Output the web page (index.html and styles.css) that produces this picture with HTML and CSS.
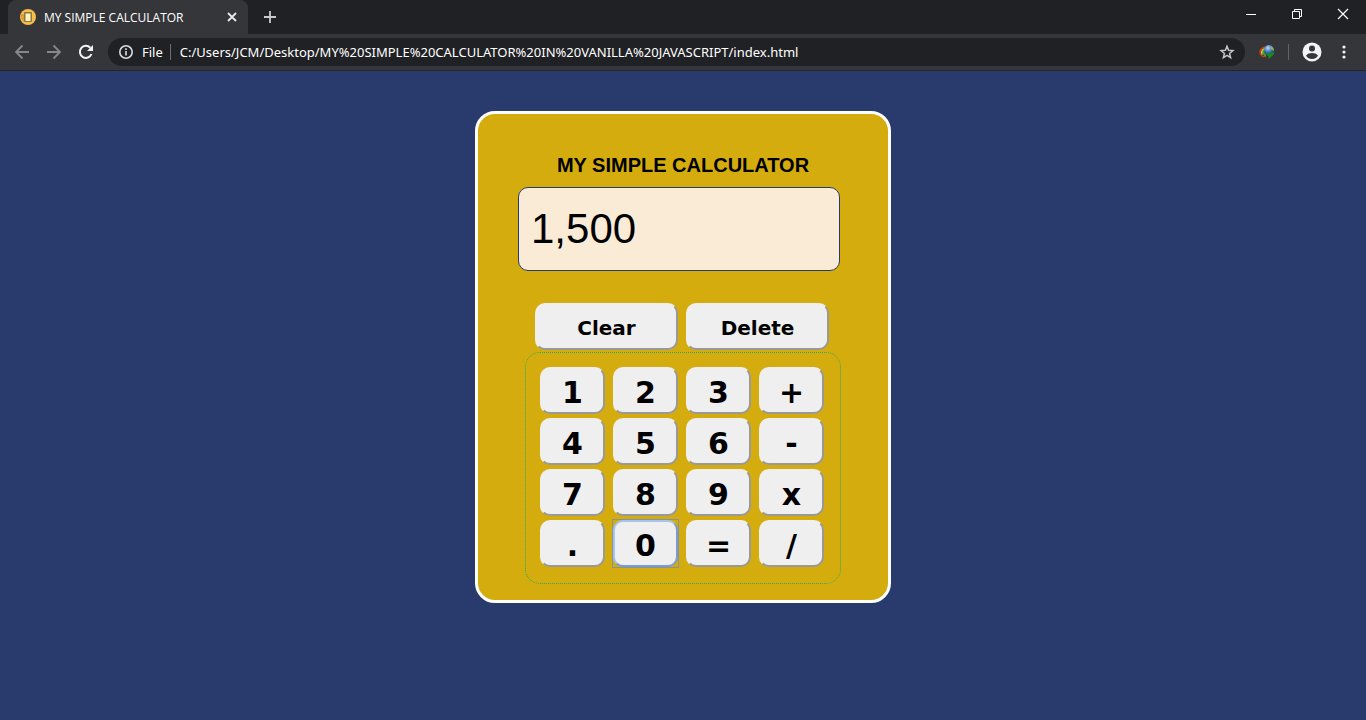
FILE: index.html
```html
<!DOCTYPE html>
<html lang="en">
<head>
<meta charset="utf-8">
<title>MY SIMPLE CALCULATOR</title>
<link rel="stylesheet" href="styles.css">
</head>
<body>
<header class="browser">
  <div class="tab-strip">
    <div class="tab">
      <svg class="favicon" width="16" height="16" viewBox="0 0 16 16" aria-hidden="true"><circle cx="8" cy="8" r="8" fill="#f6bd4b"/><path d="M1 5h6v8H4A8 8 0 0 1 1 5z" fill="#dba039"/><rect x="4" y="3" width="8" height="10" rx="1" fill="#8a7a3c"/><rect x="5.500" y="4.500" width="5" height="7.500" fill="#fff0c4"/></svg>
      <span class="tab-title">MY SIMPLE CALCULATOR</span>
      <button class="icon-button tab-close" aria-label="Close tab"><svg width="16" height="16" viewBox="0 0 16 16"><path d="M4 4l8 8M12 4l-8 8" stroke="#e8eaed" stroke-width="1.8"/></svg></button>
    </div>
    <button class="icon-button new-tab" aria-label="New tab"><svg width="16" height="16" viewBox="0 0 16 16"><path d="M8 2v12M2 8h12" stroke="#c8cacd" stroke-width="1.8"/></svg></button>
    <div class="window-controls">
      <button class="window-button" aria-label="Minimize"><svg width="12" height="12" viewBox="0 0 12 12"><path d="M1 6.5h10" stroke="#fff"/></svg></button>
      <button class="window-button" aria-label="Restore"><svg width="12" height="12" viewBox="0 0 12 12" fill="none" stroke="#fff"><path d="M1.5 3.5h7v7h-7zM3.500 3.500v-2h7v7h-2"/></svg></button>
      <button class="window-button" aria-label="Close"><svg width="12" height="12" viewBox="0 0 12 12"><path d="M1 1l10 10M11 1L1 11" stroke="#fff" stroke-width="1.2"/></svg></button>
    </div>
  </div>
  <div class="toolbar">
    <div class="nav">
      <button class="icon-button" aria-label="Back"><svg width="16" height="16" viewBox="0 0 16 16" fill="none" stroke="#85878a" stroke-width="1.800"><path d="M15 8H2.500M8.500 1.500L2 8l6.500 6.500"/></svg></button>
      <button class="icon-button" aria-label="Forward"><svg width="16" height="16" viewBox="0 0 16 16" fill="none" stroke="#85878a" stroke-width="1.800"><path d="M1 8h12.500M7.500 1.500L14 8l-6.500 6.500"/></svg></button>
      <button class="icon-button" aria-label="Reload"><svg width="16" height="16" viewBox="0 0 16 16"><path d="M13.500 10A6 6 0 1 1 12.300 3.800" fill="none" stroke="#f1f3f4" stroke-width="2"/><path d="M15 1v6H9z" fill="#f1f3f4"/></svg></button>
    </div>
    <div class="address-bar">
      <svg width="14" height="14" viewBox="0 0 14 14" aria-hidden="true"><circle cx="7" cy="7" r="6.200" fill="none" stroke="#dadce0" stroke-width="1.600"/><path d="M7 6v4.500M7 3.200v1.700" stroke="#dadce0" stroke-width="1.600"/></svg>
      <span class="scheme">File</span>
      <input class="url" aria-label="Address" value="C:/Users/JCM/Desktop/MY%20SIMPLE%20CALCULATOR%20IN%20VANILLA%20JAVASCRIPT/index.html">
      <button class="icon-button" aria-label="Bookmark this page"><svg width="16" height="16" viewBox="0 0 16 16"><path d="M8 2.300l1.600 4 4.300.3-3.300 2.800 1 4.200L8 11.400l-3.600 2.200 1-4.200-3.300-2.800 4.300-.3z" fill="none" stroke="#c4c6c9" stroke-width="1.500"/></svg></button>
    </div>
    <div class="tools">
      <button class="icon-button" aria-label="Download manager"><svg width="16" height="16" viewBox="0 0 16 16"><defs><radialGradient id="globe" cx=".4" cy=".3" r=".7"><stop offset="0" stop-color="#c4dcf5"/><stop offset=".5" stop-color="#4c82c8"/><stop offset="1" stop-color="#173d78"/></radialGradient></defs><path d="M6 3C1 4 0 9 2 11c1 2 4 2 5 1" fill="none" stroke="#c63c1e" stroke-width="1.400"/><path d="M6 4.500C2.500 6 2 9 3.500 10.500" fill="none" stroke="#ead63c" stroke-width="1.600"/><path d="M5.500 6C3.500 8 4.500 11 7 11.500" fill="none" stroke="#42a52f" stroke-width="2"/><circle cx="10" cy="6" r="5" fill="url(#globe)"/><path d="M12 2c2 1 3 3 3 5l-3-2z" fill="#a0b530"/><path d="M6 9l4 .5 6-1.500-2 3-4 4-1-3z" fill="#188b22"/></svg></button>
      <span class="divider"></span>
      <button class="icon-button profile" aria-label="Profile"><svg width="20" height="20" viewBox="0 0 20 20"><circle cx="10" cy="10" r="9.500" fill="#f1f3f4"/><circle cx="10" cy="6.500" r="3" fill="#35363a"/><path d="M4 13.700c1-2 4-2.700 6-2.700s5 .7 6 2.700c-1.300 2-3.500 3.300-6 3.300s-4.700-1.300-6-3.300z" fill="#35363a"/></svg></button>
      <button class="icon-button" aria-label="Menu"><svg width="16" height="16" viewBox="0 0 16 16" fill="#f1f3f4"><circle cx="8" cy="3" r="1.600"/><circle cx="8" cy="8" r="1.600"/><circle cx="8" cy="13" r="1.600"/></svg></button>
    </div>
  </div>
</header>
<main class="page">
  <section class="calculator">
    <h1 class="title"><label for="display">MY SIMPLE CALCULATOR</label></h1>
    <input class="display" id="display" type="text" value="1,500">
    <div class="actions">
      <button class="key action">Clear</button>
      <button class="key action">Delete</button>
    </div>
    <div class="keypad">
      <button class="key">1</button><button class="key">2</button><button class="key">3</button><button class="key">+</button>
      <button class="key">4</button><button class="key">5</button><button class="key">6</button><button class="key">-</button>
      <button class="key">7</button><button class="key">8</button><button class="key">9</button><button class="key">x</button>
      <button class="key">.</button><button class="key active">0</button><button class="key">=</button><button class="key">/</button>
    </div>
  </section>
</main>
</body>
</html>
```
FILE: styles.css
```css
* { box-sizing: border-box; }

body {
  margin: 0;
  min-height: 100vh;
  background: #293b6c;
  font-family: "Liberation Sans", Arial, sans-serif;
}

.browser {
  background: #35363a;
  border-bottom: 1px solid #252629;
  color: #fff;
  font-family: "Noto Sans", "Segoe UI", sans-serif;
}

.icon-button,
.window-button {
  display: flex;
  align-items: center;
  justify-content: center;
  padding: 0;
  border: 0;
  background: none;
}

.tab-strip {
  display: flex;
  height: 34px;
  padding-left: 8px;
  background: #202124;
}

.tab {
  display: flex;
  align-items: center;
  gap: 8px;
  width: 240px;
  padding: 0 8px 0 12px;
  border-radius: 8px 8px 0 0;
  background: #35363a;
  font-family: "Open Sans", "Segoe UI", sans-serif;
  font-size: 12px;
}

.tab-title {
  flex: 1;
  white-space: nowrap;
}

.new-tab { margin-left: 14px; }

.window-controls {
  display: flex;
  margin-left: auto;
}

.window-button {
  width: 46px;
  height: 28px;
}

.toolbar {
  display: flex;
  align-items: center;
  height: 36px;
}

.nav {
  display: flex;
  gap: 16px;
  padding: 0 14px;
}

.address-bar {
  display: flex;
  flex: 1;
  align-items: center;
  height: 28px;
  padding: 0 10px 0 11px;
  border-radius: 14px;
  background: #202124;
  font-size: 13px;
}

.scheme {
  margin-left: 9px;
  padding-right: 7px;
  border-right: 1px solid #6b6d70;
  line-height: 16px;
}

.url {
  flex: 1;
  min-width: 0;
  padding: 0 0 0 9px;
  border: 0;
  outline: 0;
  background: none;
  color: #fff;
  font: inherit;
}

.tools {
  display: flex;
  align-items: center;
  gap: 13px;
  padding: 0 14px;
}

.divider {
  width: 1px;
  height: 16px;
  background: #626367;
}

.profile { margin-right: 1px; }

.page {
  display: flex;
  justify-content: center;
  padding: 40px 16px;
}

.calculator {
  display: flex;
  flex-direction: column;
  width: 100%;
  max-width: 416px;
  padding: 39px 47px 16px 40px;
  border: 3px solid #fff;
  border-radius: 20px;
  background: #d4ac0d;
}

.title {
  margin: 0 0 10px 7px;
  font-size: 20px;
  line-height: 24px;
  text-align: center;
}

.display {
  margin-right: 1px;
  height: 84px;
  padding: 0 12px;
  border: 1px solid #293b6c;
  border-radius: 10px;
  background: #faebd7;
  color: #000;
  font-family: inherit;
  font-size: 42px;
}

.actions {
  display: grid;
  grid-template-columns: 1fr 1fr;
  gap: 8px;
  margin: 32px 12px 2px 17px;
}

.keypad {
  display: grid;
  grid-template-columns: repeat(4, 1fr);
  gap: 4px 8px;
  margin-left: 7px;
  padding: 14px 16px 16px 14px;
  border: 1px dotted #27ae60;
  border-radius: 15px;
}

.key {
  position: relative;
  height: 47px;
  padding: 3px 0 0;
  border: 2px solid;
  border-color: #efefef #999 #999 #efefef;
  border-radius: 10px;
  background: #efefef;
  color: #000;
  font-family: Verdana, "DejaVu Sans", sans-serif;
  font-size: 30px;
  font-weight: bold;
}

.action {
  padding-top: 2px;
  font-size: 20px;
}

.active { border-color: #a4c4f4 #7a9bcf #7a9bcf #a4c4f4; }

/* Square focus ring around the rounded key */
.active::after {
  content: "";
  position: absolute;
  inset: -3px;
  border: 1px solid #85939a;
}
```
